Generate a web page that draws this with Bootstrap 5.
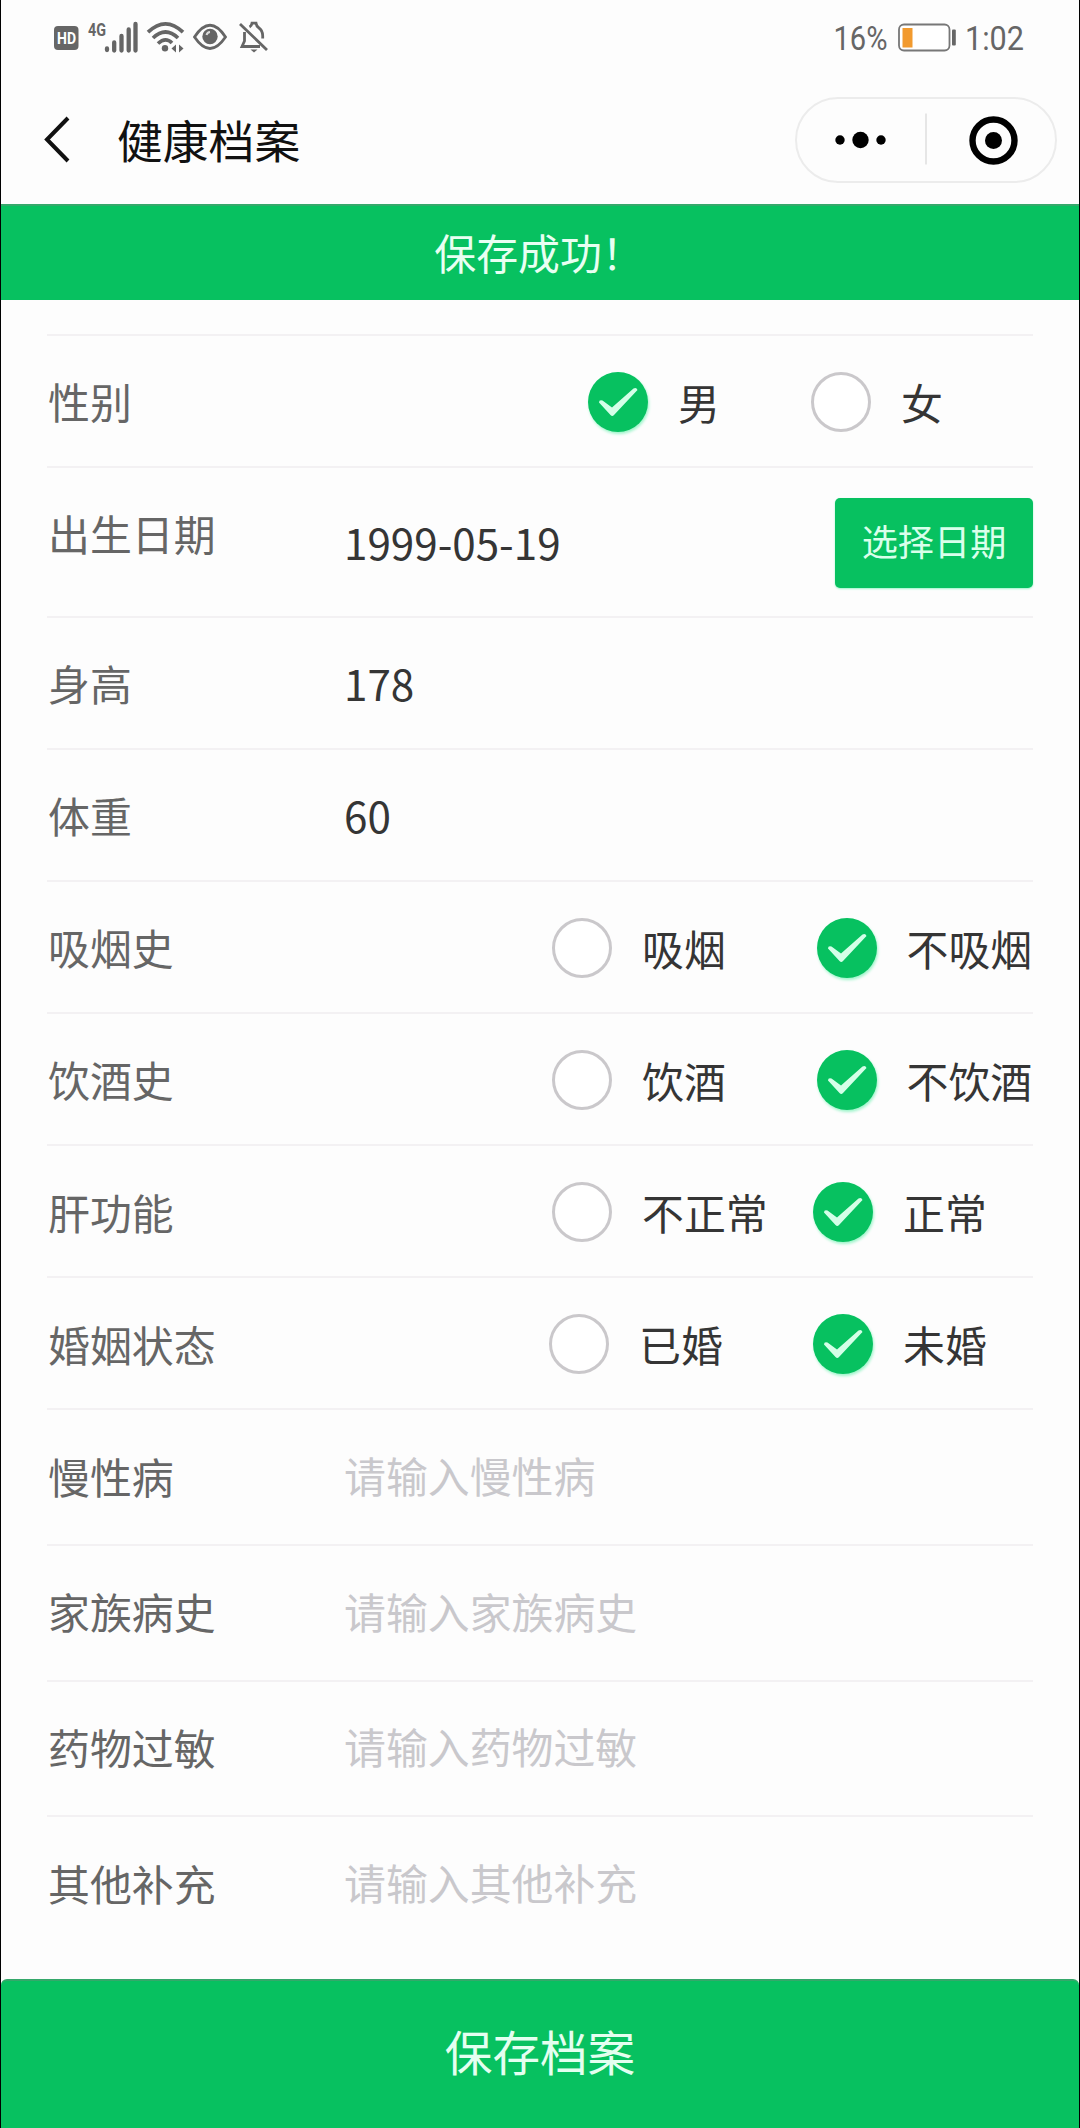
<!DOCTYPE html>
<html lang="zh-CN">
<head>
<meta charset="utf-8">
<meta name="viewport" content="width=device-width, initial-scale=1">
<title>健康档案</title>
<link href="https://cdn.jsdelivr.net/npm/bootstrap@5.3.0/dist/css/bootstrap.min.css" rel="stylesheet">
<style>
  :root { --brand: #07c160; }
  body { font-family: "Noto Sans CJK SC", sans-serif; font-size: 41.9px; line-height: 60px; color: #353535; background: #fdfdfd; }
  svg { display: block; flex: none; }
  .phone { height: 2128px; border-left: 1px solid #000; border-right: 1px solid #000; overflow: hidden; }
  .status-bar { height: 76px; padding: 0 0 0 53px; }
  .title-bar { height: 128px; padding: 0 22px 0 41px; }
  .page-title { font-size: 45.8px; color: #111; margin-left: 45px; font-weight: 400; }
  .capsule { width: 262px; height: 86px; border: 2px solid #ececec; margin-top: -1px; }
  .notice { height: 96px; background: var(--brand); color: #e8fff2; border-top: 2px solid #35a86b; padding: 0 2px 2px 0; }
  .form-area { padding: 33.5px 46px 0 46px; }
  .line-item { height: 132.1px; border-top: 2px solid #f3f1f3; }
  .line-item.date-row { height: 150px; }
  .line-item.input-row { height: 135.7px; }
  .line-label { width: 297px; padding: 1px 0 0 1px; color: #666; flex: none; }
  .date-row .line-label { margin-top: -18px; }
  .input-row .line-label { margin-top: -4px; }
  .value { font-size: 42.2px; padding-top: 1px; }
  .entry { font-size: 41.9px; line-height: 60px; color: #353535; margin-top: -4px; }
  .entry::placeholder { color: #c9c8cc; opacity: 1; }
  .choices { padding-top: 2px; }
  .choice { gap: 30px; }
  .sex { width: 445px; }      .sex .choice:first-child { width: 223px; }
  .habit { width: 481px; }    .habit .choice:first-child { width: 264.5px; }
  .liver { width: 481px; }    .liver .choice:first-child { width: 261px; }
  .marital { width: 484px; }  .marital .choice:first-child { width: 264px; }
  .tick { width: 60px; height: 60px; flex: none; }
  .tick.off { border: 3px solid #cac8cb; background: #fff; }
  .tick.on { background: var(--brand); box-shadow: 1px 2px 3px #9df5ca; }
  .btn-pick { width: 198px; height: 90px; padding: 0 0 5px; font-size: 36.2px; line-height: 50px; border: 0; border-radius: 5px; background: var(--brand); color: #d9ffeb; margin-top: 2px; box-shadow: 0 1px 2px #9df5ca; }
  .btn-save { height: 149px; padding: 0 0 8px; font-size: 47.6px; border: 0; border-top: 2px solid #35a86b; border-radius: 6px 6px 0 0; background: var(--brand); color: #e4fff0; }
</style>
</head>
<body>
<div class="phone d-flex flex-column">
  <header>
    <div class="status-bar d-flex align-items-start justify-content-between">
      <svg width="220" height="76" viewBox="54 0 220 76" fill="none" stroke="#666" stroke-width="2.8">
        <rect x="54" y="26" width="24.500" height="24" rx="4" fill="#666" stroke="none"/>
        <text x="57" y="43.500" textLength="19" lengthAdjust="spacingAndGlyphs" font-family="Roboto" font-weight="700" font-size="16" fill="#fff" stroke="none">HD</text>
        <text x="88" y="35.500" textLength="18" lengthAdjust="spacingAndGlyphs" font-family="Roboto" font-weight="700" font-size="18.500" fill="#666" stroke="none">4G</text>
        <g stroke-width="4.300" stroke-linecap="round"><path d="M107 48.500v1.500M114.200 42.500v8M121.500 36v14.500M128.700 29.500v21M135.500 24v26.500"/></g>
        <g stroke-width="3.700"><path d="M148 32.200Q165.500 15.500 183 32.200M153 38Q165.500 26 178 38M158 43.500Q165.500 36.500 172 43"/></g>
        <circle cx="165" cy="48.300" r="3.200" fill="#666" stroke="none"/>
        <path d="M176 44.500v8l-4.500-4zM179 44.500v8l4.500-4z" fill="#666" stroke="none"/>
        <path d="M194.500 37Q210 13.500 225.500 37Q210 60 194.500 37Z"/>
        <circle cx="210" cy="36.500" r="7.700" fill="#666" stroke="none"/>
        <path d="M206.500 35q.8-2.800 3.500-3" stroke="#ddd" stroke-width="2"/>
        <path d="M240 24L267 50M244.500 32V41L242 46.500H260M249.500 27Q251.500 26 252 23.200H256Q256.500 26.500 259 28Q262.700 30.500 262.700 36V38.500"/>
        <path d="M250.500 49.500h7l-3.500 3z" fill="#666" stroke="none"/>
      </svg>
      <svg width="244" height="76" viewBox="836 0 244 76" fill="#666">
        <text x="834.500" y="50" textLength="54" lengthAdjust="spacingAndGlyphs" font-family="Roboto" font-size="34">16%</text>
        <rect x="900" y="24.500" width="50.500" height="26" rx="5" fill="#fff" stroke="#777" stroke-width="1.800"/>
        <rect x="903.500" y="28" width="10" height="19.500" fill="#f29a2e"/>
        <rect x="953" y="29.500" width="3.800" height="16" rx="1"/>
        <text x="966" y="50" textLength="59" lengthAdjust="spacingAndGlyphs" font-family="Roboto" font-size="34">1:02</text>
      </svg>
    </div>
    <nav class="title-bar d-flex align-items-center">
      <svg width="30" height="48" viewBox="0 0 30 48" fill="none" stroke="#111" stroke-width="4"><path d="M26 2L5 23.500L26 45"/></svg>
      <h1 class="page-title mb-0 lh-1">健康档案</h1>
      <div class="capsule rounded-pill ms-auto d-flex align-items-center">
        <svg width="258" height="82" viewBox="797 99 258 82"><g fill="#000"><circle cx="840" cy="140" r="4.700"/><circle cx="860.500" cy="140" r="8.200"/><circle cx="881" cy="140" r="4.700"/><circle cx="993.500" cy="140.500" r="8.500"/></g><path d="M926 113.500v51" stroke="#dedede" stroke-width="1.500"/><circle cx="993.500" cy="140.500" r="21" fill="none" stroke="#000" stroke-width="6.400"/></svg>
      </div>
    </nav>
  </header>

  <div class="notice d-flex align-items-center justify-content-center" role="alert">保存成功！</div>

  <main class="form-area flex-grow-1">
    <div class="line-item d-flex align-items-center">
      <div class="line-label">性别</div>
      <div class="choices sex ms-auto d-flex">
        <div class="choice d-flex align-items-center"><span class="tick on rounded-circle"><svg width="60" height="60"><use href="#check"/></svg></span>男</div>
        <div class="choice d-flex align-items-center"><span class="tick off rounded-circle"></span>女</div>
      </div>
    </div>
    <div class="line-item date-row d-flex align-items-center">
      <div class="line-label">出生日期</div>
      <div class="value">1999-05-19</div>
      <button type="button" class="btn btn-pick ms-auto">选择日期</button>
    </div>
    <div class="line-item d-flex align-items-center">
      <div class="line-label">身高</div><div class="value">178</div>
    </div>
    <div class="line-item d-flex align-items-center">
      <div class="line-label">体重</div><div class="value">60</div>
    </div>
    <div class="line-item d-flex align-items-center">
      <div class="line-label">吸烟史</div>
      <div class="choices habit ms-auto d-flex">
        <div class="choice d-flex align-items-center"><span class="tick off rounded-circle"></span>吸烟</div>
        <div class="choice d-flex align-items-center text-nowrap"><span class="tick on rounded-circle"><svg width="60" height="60"><use href="#check"/></svg></span>不吸烟</div>
      </div>
    </div>
    <div class="line-item d-flex align-items-center">
      <div class="line-label">饮酒史</div>
      <div class="choices habit ms-auto d-flex">
        <div class="choice d-flex align-items-center"><span class="tick off rounded-circle"></span>饮酒</div>
        <div class="choice d-flex align-items-center text-nowrap"><span class="tick on rounded-circle"><svg width="60" height="60"><use href="#check"/></svg></span>不饮酒</div>
      </div>
    </div>
    <div class="line-item d-flex align-items-center">
      <div class="line-label">肝功能</div>
      <div class="choices liver ms-auto d-flex">
        <div class="choice d-flex align-items-center text-nowrap"><span class="tick off rounded-circle"></span>不正常</div>
        <div class="choice d-flex align-items-center"><span class="tick on rounded-circle"><svg width="60" height="60"><use href="#check"/></svg></span>正常</div>
      </div>
    </div>
    <div class="line-item d-flex align-items-center">
      <div class="line-label">婚姻状态</div>
      <div class="choices marital ms-auto d-flex">
        <div class="choice d-flex align-items-center"><span class="tick off rounded-circle"></span>已婚</div>
        <div class="choice d-flex align-items-center"><span class="tick on rounded-circle"><svg width="60" height="60"><use href="#check"/></svg></span>未婚</div>
      </div>
    </div>
    <div class="line-item input-row d-flex align-items-center">
      <label class="line-label" for="chronic">慢性病</label>
      <input id="chronic" class="entry form-control-plaintext p-0 border-0" placeholder="请输入慢性病">
    </div>
    <div class="line-item input-row d-flex align-items-center">
      <label class="line-label" for="family">家族病史</label>
      <input id="family" class="entry form-control-plaintext p-0 border-0" placeholder="请输入家族病史">
    </div>
    <div class="line-item input-row d-flex align-items-center">
      <label class="line-label" for="allergy">药物过敏</label>
      <input id="allergy" class="entry form-control-plaintext p-0 border-0" placeholder="请输入药物过敏">
    </div>
    <div class="line-item input-row d-flex align-items-center">
      <label class="line-label" for="other">其他补充</label>
      <input id="other" class="entry form-control-plaintext p-0 border-0" placeholder="请输入其他补充">
    </div>
  </main>

  <button type="button" class="btn btn-save w-100 flex-shrink-0">保存档案</button>
</div>
<svg width="0" height="0" class="d-none">
  <symbol id="check" viewBox="0 0 60 60"><path d="M11 30.500Q11 27.500 14.500 28.500L24 35.500L45.500 16.500Q48.500 15 49.500 18L26 43Q24.300 45 22.500 43Z" fill="#d4ffe8"/></symbol>
</svg>
<script src="https://cdn.jsdelivr.net/npm/bootstrap@5.3.0/dist/js/bootstrap.bundle.min.js"></script>
</body>
</html>
